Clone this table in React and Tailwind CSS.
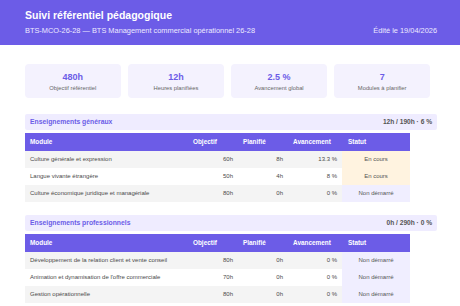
import React from "react";

const stats = [
  { v: "480h", l: "Objectif référentiel" },
  { v: "12h", l: "Heures planifiées" },
  { v: "2.5 %", l: "Avancement global" },
  { v: "7", l: "Modules à planifier" },
];

const sections = [
  {
    title: "Enseignements généraux",
    summary: "12h / 190h · 6 %",
    rows: [
      ["Culture générale et expression", "60h", "8h", "13.3 %", "En cours"],
      ["Langue vivante étrangère", "50h", "4h", "8 %", "En cours"],
      ["Culture économique juridique et managériale", "80h", "0h", "0 %", "Non démarré"],
    ],
  },
  {
    title: "Enseignements professionnels",
    summary: "0h / 290h · 0 %",
    rows: [
      ["Développement de la relation client et vente conseil", "80h", "0h", "0 %", "Non démarré"],
      ["Animation et dynamisation de l'offre commerciale", "70h", "0h", "0 %", "Non démarré"],
      ["Gestion opérationnelle", "80h", "0h", "0 %", "Non démarré"],
    ],
  },
];

function Section({ s }) {
  return (
    <div className="flex flex-col">
      <div className="h-[16px] w-[412px] bg-[#efecff] rounded-[2px] flex items-center justify-between px-[5px]">
        <span className="text-[6.8px] font-bold text-[#6c5ce7]">{s.title}</span>
        <span className="text-[6.6px] font-bold text-[#555]">{s.summary}</span>
      </div>
      <table className="mt-[3px] w-[385px] table-fixed border-collapse text-[6px] text-[#4a4a4a]">
        <colgroup>
          <col className="w-[163px]" />
          <col className="w-[50px]" />
          <col className="w-[50px]" />
          <col className="w-[54px]" />
          <col className="w-[68px]" />
        </colgroup>
        <thead>
          <tr className="h-[18px] bg-[#6c5ce7] text-white text-[6.4px] font-bold">
            <th className="text-left pl-[5px] font-bold">Module</th>
            <th className="text-left pl-[5px] font-bold">Objectif</th>
            <th className="text-left pl-[5px] font-bold">Planifié</th>
            <th className="text-left pl-[5px] font-bold">Avancement</th>
            <th className="text-left pl-[6px] font-bold">Statut</th>
          </tr>
        </thead>
        <tbody>
          {s.rows.map((r, i) => (
            <tr key={i} className={"h-[17px] " + (i % 2 === 0 ? "bg-[#f4f4f4]" : "bg-white")}>
              <td className="pl-[5px] whitespace-nowrap overflow-hidden">{r[0]}</td>
              <td className="text-right pr-[5px]">{r[1]}</td>
              <td className="text-right pr-[5px]">{r[2]}</td>
              <td className="text-right pr-[5px]">{r[3]}</td>
              <td
                className={
                  "text-center text-[#555] " +
                  (r[4] === "En cours" ? "bg-[#fff3e0]" : "bg-[#f0eeff]")
                }
              >
                {r[4]}
              </td>
            </tr>
          ))}
        </tbody>
      </table>
    </div>
  );
}

export default function App() {
  return (
    <div className="w-[460px] h-[306px] overflow-hidden bg-white font-['Liberation_Sans',Arial,sans-serif]">
      <header className="h-[45px] bg-[#6c5ce7] px-[25px] pt-[8px] text-white">
        <div className="text-[10.5px] font-bold leading-[14px]">Suivi référentiel pédagogique</div>
        <div className="mt-[4px] flex justify-between w-[412px] text-[7.4px] leading-[10px] text-[#eceaff]">
          <span>BTS-MCO-26-28 — BTS Management commercial opérationnel 26-28</span>
          <span>Édité le 19/04/2026</span>
        </div>
      </header>
      <main className="px-[25px] pt-[19px]">
        <div className="grid grid-cols-4 gap-[7.5px] w-[405px]">
          {stats.map((s) => (
            <div
              key={s.l}
              className="h-[34px] rounded-[4px] bg-[#f4f2fe] flex flex-col items-center pt-[7px]"
            >
              <div className="text-[9px] font-bold leading-[12px] text-[#6c5ce7]">{s.v}</div>
              <div className="mt-[1px] text-[5.8px] leading-[8px] text-[#666]">{s.l}</div>
            </div>
          ))}
        </div>
        <div className="mt-[16px] flex flex-col gap-[13px]">
          {sections.map((s) => (
            <Section key={s.title} s={s} />
          ))}
        </div>
      </main>
    </div>
  );
}
